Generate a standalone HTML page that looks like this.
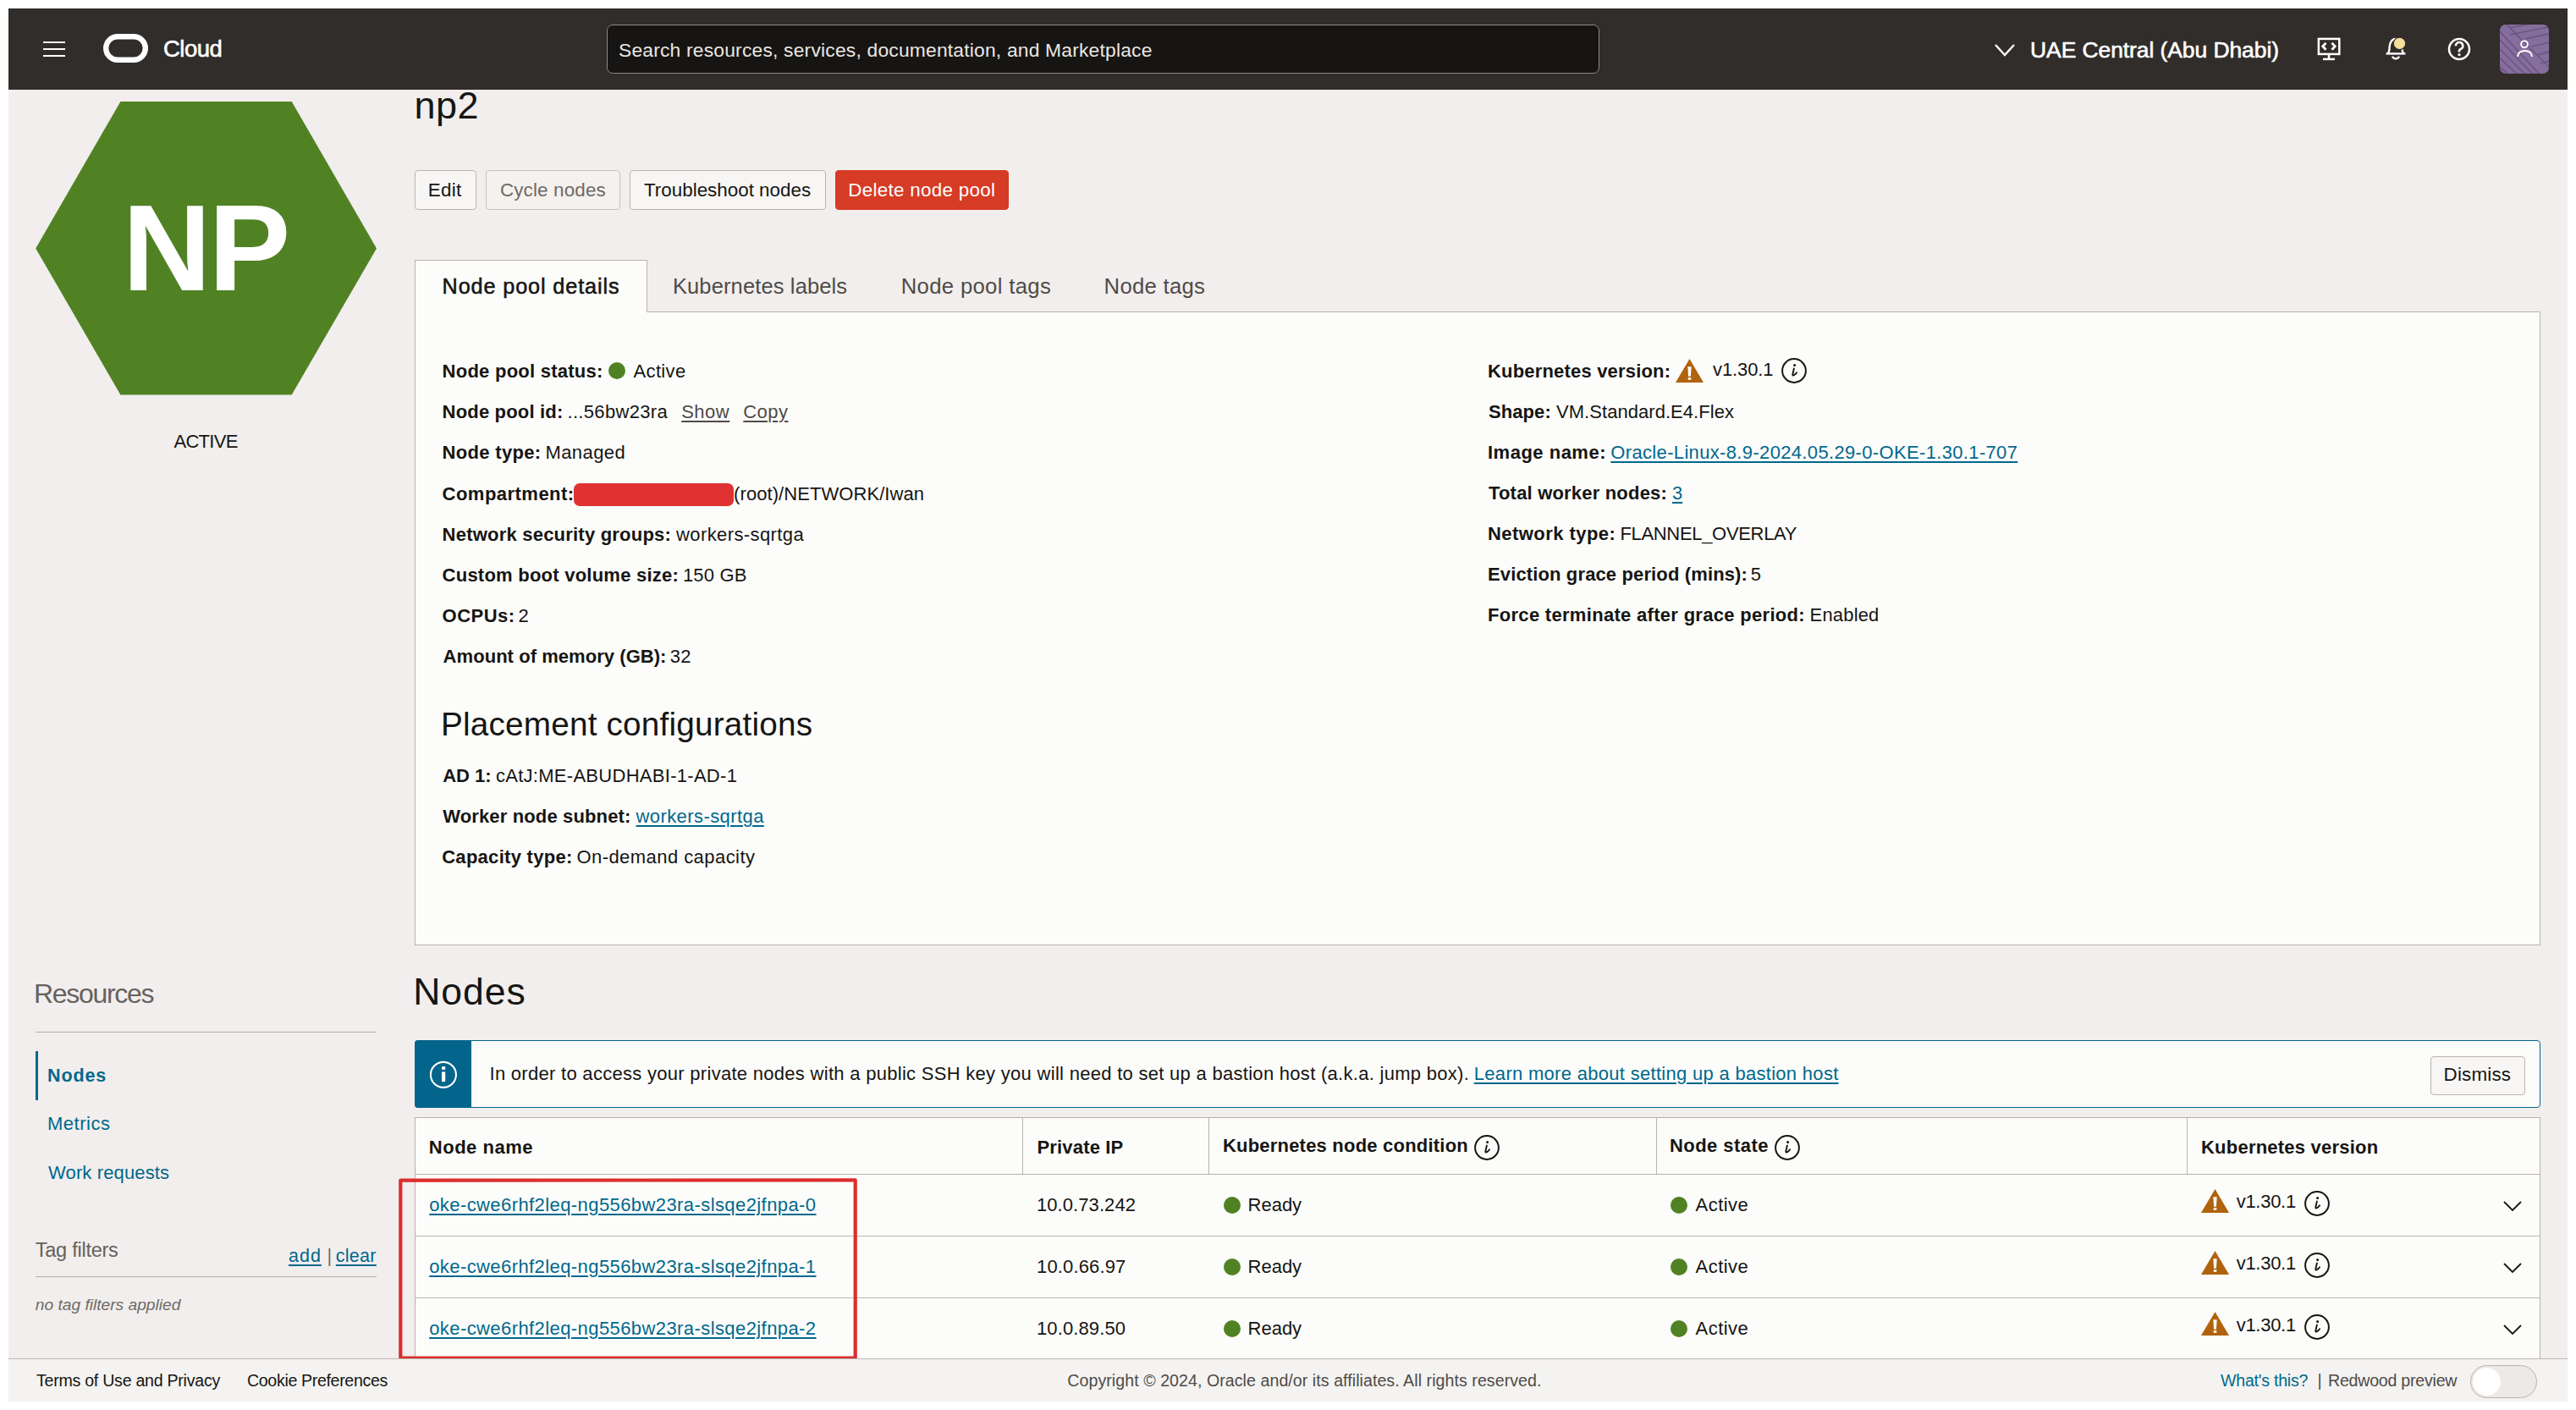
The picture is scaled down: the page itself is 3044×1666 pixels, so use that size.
<!DOCTYPE html>
<html><head><meta charset="utf-8"><title>np2 - Node pool</title>
<style>
html,body{margin:0;padding:0;background:#fff;width:3044px;height:1666px;overflow:hidden}
body{position:relative;font-family:"Liberation Sans",sans-serif}
.t{position:absolute;white-space:nowrap;line-height:1}
.ul{text-decoration:underline;text-underline-offset:3px;text-decoration-thickness:1.5px}
</style></head><body>
<div style="position:absolute;left:10px;top:106px;width:3024.0px;height:1550.0px;background:#f1eeed"></div>
<div style="position:absolute;left:10px;top:10px;width:3024.0px;height:96.0px;background:#312d2a"></div>
<div style="position:absolute;left:51px;top:48.9px;width:26.0px;height:2.3px;background:#fff"></div>
<div style="position:absolute;left:51px;top:56.9px;width:26.0px;height:2.3px;background:#fff"></div>
<div style="position:absolute;left:51px;top:64.9px;width:26.0px;height:2.3px;background:#fff"></div>
<svg style="position:absolute;left:118px;top:36px" width="62" height="42"><rect x="7.2" y="7.2" width="46.6" height="27.6" rx="13.8" fill="none" stroke="#fff" stroke-width="6.4"/></svg>
<div class="t" style="left:193.0px;top:44.3px;font-size:27.5px;font-weight:400;color:#fff;-webkit-text-stroke:0.6px #fff;letter-spacing:-0.5px;">Cloud</div>
<div style="position:absolute;left:717px;top:29px;width:1173.0px;height:58.0px;background:#161513;border:1.5px solid #8f8984;border-radius:7px;box-sizing:border-box"></div>
<div class="t" style="left:731.0px;top:48.3px;font-size:22.8px;font-weight:400;color:#ebe7e2;letter-spacing:0.211px;">Search resources, services, documentation, and Marketplace</div>
<svg style="position:absolute;left:2354px;top:48px" width="30" height="22"><polyline points="4,5 15,17 26,5" fill="none" stroke="#fff" stroke-width="2.4"/></svg>
<div class="t" style="left:2399.0px;top:45.8px;font-size:26.5px;font-weight:400;color:#fff;-webkit-text-stroke:0.6px #fff;letter-spacing:-0.091px;">UAE Central (Abu Dhabi)</div>
<svg style="position:absolute;left:2734px;top:41px" width="36" height="34" fill="none" stroke="#fff" stroke-width="2.5">
<rect x="5.9" y="4.9" width="24.4" height="18"/><line x1="18" y1="23" x2="18" y2="28.5"/><line x1="11" y1="28.9" x2="25" y2="28.9"/>
<polyline points="14.5,9.8 10.8,13.8 14.5,17.8" stroke-width="2.8"/><polyline points="21.5,9.8 25.2,13.8 21.5,17.8" stroke-width="2.8"/></svg>
<svg style="position:absolute;left:2814px;top:41px" width="36" height="34" fill="none" stroke="#fff" stroke-width="2.4">
<path d="M7.4 22.4 Q9.6 20.5 9.6 14.5 A7.4 9.6 0 0 1 24.4 14.5 Q24.4 20.5 26.6 22.4" stroke-linejoin="round"/><line x1="5.6" y1="22.4" x2="28.4" y2="22.4"/>
<path d="M13 25.6 A4.2 3.8 0 0 0 21 25.6" stroke-width="2.3"/>
<circle cx="21.5" cy="10.4" r="7.2" fill="#f7de9a" stroke="#312d2a" stroke-width="1.2"/></svg>
<svg style="position:absolute;left:2888px;top:41px" width="36" height="34" fill="none" stroke="#fff" stroke-width="2.5">
<circle cx="18" cy="17" r="12"/><path d="M13.9 13.2 A4.2 4.2 0 1 1 19 17.3 Q18 17.9 18 19.3 L18 20.6" stroke-width="2.7"/><circle cx="18" cy="23.7" r="1.6" fill="#fff" stroke="none"/></svg>
<svg style="position:absolute;left:2954px;top:29px" width="58" height="58">
<defs><clipPath id="av"><rect width="58" height="58" rx="7"/></clipPath></defs>
<g clip-path="url(#av)"><rect width="58" height="58" fill="#856d9d"/>
<g stroke="#6a5580" stroke-width="1.5" fill="none">
<path d="M12 4 L60 -6"/><path d="M12 12 L62 2"/><path d="M30 17 L62 10"/><path d="M38 26 L62 20"/><path d="M44 36 L62 31"/><path d="M48 46 L62 42"/>
<path d="M-4 4 L50 62"/><path d="M-4 14 L42 62"/><path d="M-4 25 L33 62"/><path d="M-4 36 L24 62"/><path d="M-4 47 L14 62"/><path d="M4 -4 L60 52"/>
</g></g>
<g fill="none" stroke="#fff" stroke-width="1.9"><circle cx="29" cy="23.3" r="3.9"/><path d="M21 38 Q21.5 31 29.5 31 Q37.5 31 38 38"/></g></svg>
<svg style="position:absolute;left:0;top:0" width="460" height="480"><polygon points="142.4,120 344.7,120 445,293.5 344.7,466.5 142.4,466.5 42.2,293.5" fill="#508223"/></svg>
<div class="t" style="left:144.8px;top:220.6px;font-size:145px;font-weight:700;color:#fff;letter-spacing:-3.0px;">NP</div>
<div class="t" style="left:205.4px;top:511.3px;font-size:22px;font-weight:400;color:#161513;letter-spacing:-0.68px;">ACTIVE</div>
<div class="t" style="left:489.6px;top:102.3px;font-size:45px;font-weight:400;color:#161513;letter-spacing:0.4px;">np2</div>
<div style="position:absolute;left:490px;top:201px;width:73.0px;height:47.0px;background:#f7f6f5;border:1px solid #bab5b0;border-radius:4px;box-sizing:border-box"></div>
<div class="t" style="left:505.8px;top:213.9px;font-size:22.4px;font-weight:400;color:#161513;letter-spacing:0.3px;">Edit</div>
<div style="position:absolute;left:574px;top:201px;width:159.0px;height:47.0px;background:#f5f1ee;border:1px solid #c7c1bc;border-radius:4px;box-sizing:border-box"></div>
<div class="t" style="left:590.9px;top:213.9px;font-size:22.4px;font-weight:400;color:#6f6a66;letter-spacing:0.16px;">Cycle nodes</div>
<div style="position:absolute;left:744px;top:201px;width:232.0px;height:47.0px;background:#f7f6f5;border:1px solid #bab5b0;border-radius:4px;box-sizing:border-box"></div>
<div class="t" style="left:761.0px;top:213.9px;font-size:22.4px;font-weight:400;color:#161513;letter-spacing:0.0px;">Troubleshoot nodes</div>
<div style="position:absolute;left:987px;top:201px;width:205.0px;height:47.0px;background:#d63b25;border:1px solid #d63b25;border-radius:4px;box-sizing:border-box"></div>
<div class="t" style="left:1002.2px;top:213.9px;font-size:22.4px;font-weight:400;color:#fff;letter-spacing:0.293px;">Delete node pool</div>
<div style="position:absolute;left:490px;top:368px;width:2512.0px;height:749.0px;background:#fcfcfa;border:1px solid #b9b3ae;box-sizing:border-box"></div>
<div style="position:absolute;left:490px;top:307px;width:275.0px;height:62.0px;background:#fcfcfa;border:1px solid #b9b3ae;border-bottom:none;box-sizing:border-box"></div>
<div class="t" style="left:522.6px;top:326.0px;font-size:25.2px;font-weight:400;color:#161513;-webkit-text-stroke:0.55px #161513;letter-spacing:0.894px;">Node pool details</div>
<div class="t" style="left:794.9px;top:325.7px;font-size:25.5px;font-weight:400;color:#4f4b47;letter-spacing:0.131px;">Kubernetes labels</div>
<div class="t" style="left:1064.7px;top:325.5px;font-size:25.7px;font-weight:400;color:#4f4b47;letter-spacing:0.331px;">Node pool tags</div>
<div class="t" style="left:1304.6px;top:325.5px;font-size:25.7px;font-weight:400;color:#4f4b47;letter-spacing:0.275px;">Node tags</div>
<div class="t" style="left:522.6px;top:427.7px;font-size:22px;font-weight:700;color:#161513;letter-spacing:0.25px;">Node pool status:</div>
<div style="position:absolute;left:719.0px;top:428.2px;width:20.0px;height:20.0px;background:#508223;border-radius:50%"></div>
<div class="t" style="left:748.5px;top:427.7px;font-size:22px;font-weight:400;color:#161513;letter-spacing:0.36px;">Active</div>
<div class="t" style="left:522.6px;top:476.0px;font-size:22px;font-weight:700;color:#161513;letter-spacing:0.175px;">Node pool id:</div>
<div class="t" style="left:670.5px;top:476.0px;font-size:22px;font-weight:400;color:#161513;letter-spacing:0.32px;">...56bw23ra</div>
<div class="t" style="left:805.2px;top:476.0px;font-size:22px;font-weight:400;color:#4f4b47;text-decoration:underline;text-underline-offset:3px;text-decoration-thickness:1.5px;letter-spacing:0.5px;">Show</div>
<div class="t" style="left:878.3px;top:476.0px;font-size:22px;font-weight:400;color:#4f4b47;text-decoration:underline;text-underline-offset:3px;text-decoration-thickness:1.5px;letter-spacing:0.433px;">Copy</div>
<div class="t" style="left:522.6px;top:524.4px;font-size:22px;font-weight:700;color:#161513;letter-spacing:0.322px;">Node type:</div>
<div class="t" style="left:644.4px;top:524.4px;font-size:22px;font-weight:400;color:#161513;letter-spacing:0.433px;">Managed</div>
<div class="t" style="left:522.6px;top:572.7px;font-size:22px;font-weight:700;color:#161513;letter-spacing:0.473px;">Compartment:</div>
<div style="position:absolute;left:677.7px;top:571.4px;width:189.6px;height:27.0px;background:#e03232;border-radius:7px"></div>
<div class="t" style="left:867.1px;top:572.7px;font-size:22px;font-weight:400;color:#161513;letter-spacing:0.067px;">(root)/NETWORK/Iwan</div>
<div class="t" style="left:522.6px;top:620.7px;font-size:22px;font-weight:700;color:#161513;letter-spacing:0.217px;">Network security groups:</div>
<div class="t" style="left:799.1px;top:620.7px;font-size:22px;font-weight:400;color:#161513;letter-spacing:0.392px;">workers-sqrtga</div>
<div class="t" style="left:522.6px;top:668.7px;font-size:22px;font-weight:700;color:#161513;letter-spacing:0.235px;">Custom boot volume size:</div>
<div class="t" style="left:806.9px;top:668.7px;font-size:22px;font-weight:400;color:#161513;letter-spacing:0.18px;">150 GB</div>
<div class="t" style="left:522.6px;top:716.7px;font-size:22px;font-weight:700;color:#161513;letter-spacing:0.48px;">OCPUs:</div>
<div class="t" style="left:612.6px;top:716.7px;font-size:22px;font-weight:400;color:#161513;letter-spacing:0px;">2</div>
<div class="t" style="left:523.6px;top:764.8px;font-size:22px;font-weight:700;color:#161513;letter-spacing:0.052px;">Amount of memory (GB):</div>
<div class="t" style="left:791.7px;top:764.8px;font-size:22px;font-weight:400;color:#161513;letter-spacing:0.3px;">32</div>
<div class="t" style="left:1758.0px;top:427.7px;font-size:22px;font-weight:700;color:#161513;letter-spacing:0.183px;">Kubernetes version:</div>
<svg style="position:absolute;left:1980px;top:424px" width="33" height="28" viewBox="0 0 33 28"><polygon points="16.5,0 33,28 0,28" fill="#b0620c"/><polygon points="14.3,9.2 18.7,9.2 17.9,20.8 15.1,20.8" fill="#fff"/><rect x="14.7" y="22.1" width="3.6" height="2.7" fill="#fff"/></svg>
<div class="t" style="left:2024.0px;top:425.8px;font-size:22px;font-weight:400;color:#161513;letter-spacing:-0.1px;">v1.30.1</div>
<svg style="position:absolute;left:2105px;top:423px" width="30" height="30" viewBox="0 0 30 30"><circle cx="15" cy="15" r="13.9" fill="none" stroke="#161513" stroke-width="2"/><circle cx="15.6" cy="8.4" r="1.5" fill="#161513"/><path d="M14.9 12.4 L13.4 19 Q13 20.9 14.6 20.4 Q16.4 19.7 18.1 17.3" fill="none" stroke="#161513" stroke-width="1.9" stroke-linecap="round" stroke-linejoin="round"/></svg>
<div class="t" style="left:1759.0px;top:475.7px;font-size:22px;font-weight:700;color:#161513;letter-spacing:0.08px;">Shape:</div>
<div class="t" style="left:1839.0px;top:475.7px;font-size:22px;font-weight:400;color:#161513;letter-spacing:0.05px;">VM.Standard.E4.Flex</div>
<div class="t" style="left:1758.0px;top:523.7px;font-size:22px;font-weight:700;color:#161513;letter-spacing:0.5px;">Image name:</div>
<div class="t" style="left:1903.3px;top:523.7px;font-size:22px;font-weight:400;color:#00688c;text-decoration:underline;text-underline-offset:3px;text-decoration-thickness:1.5px;letter-spacing:0.342px;">Oracle-Linux-8.9-2024.05.29-0-OKE-1.30.1-707</div>
<div class="t" style="left:1759.0px;top:571.7px;font-size:22px;font-weight:700;color:#161513;letter-spacing:0.189px;">Total worker nodes:</div>
<div class="t" style="left:1976.0px;top:571.7px;font-size:22px;font-weight:400;color:#00688c;text-decoration:underline;text-underline-offset:3px;text-decoration-thickness:1.5px;letter-spacing:0px;">3</div>
<div class="t" style="left:1758.0px;top:619.7px;font-size:22px;font-weight:700;color:#161513;letter-spacing:0.442px;">Network type:</div>
<div class="t" style="left:1914.4px;top:619.7px;font-size:22px;font-weight:400;color:#161513;letter-spacing:-0.321px;">FLANNEL_OVERLAY</div>
<div class="t" style="left:1758.0px;top:667.7px;font-size:22px;font-weight:700;color:#161513;letter-spacing:0.132px;">Eviction grace period (mins):</div>
<div class="t" style="left:2068.7px;top:667.7px;font-size:22px;font-weight:400;color:#161513;letter-spacing:0px;">5</div>
<div class="t" style="left:1758.0px;top:715.7px;font-size:22px;font-weight:700;color:#161513;letter-spacing:0.303px;">Force terminate after grace period:</div>
<div class="t" style="left:2138.6px;top:715.7px;font-size:22px;font-weight:400;color:#161513;letter-spacing:0.167px;">Enabled</div>
<div class="t" style="left:521.0px;top:837.1px;font-size:38.7px;font-weight:400;color:#161513;letter-spacing:0.2px;">Placement configurations</div>
<div class="t" style="left:523.2px;top:905.7px;font-size:22px;font-weight:700;color:#161513;letter-spacing:-0.025px;">AD 1:</div>
<div class="t" style="left:585.9px;top:905.7px;font-size:22px;font-weight:400;color:#161513;letter-spacing:0.286px;">cAtJ:ME-ABUDHABI-1-AD-1</div>
<div class="t" style="left:523.2px;top:953.7px;font-size:22px;font-weight:700;color:#161513;letter-spacing:0.139px;">Worker node subnet:</div>
<div class="t" style="left:751.5px;top:953.7px;font-size:22px;font-weight:400;color:#00688c;text-decoration:underline;text-underline-offset:3px;text-decoration-thickness:1.5px;letter-spacing:0.415px;">workers-sqrtga</div>
<div class="t" style="left:522.2px;top:1001.8px;font-size:22px;font-weight:700;color:#161513;letter-spacing:0.285px;">Capacity type:</div>
<div class="t" style="left:681.4px;top:1001.8px;font-size:22px;font-weight:400;color:#161513;letter-spacing:0.447px;">On-demand capacity</div>
<div class="t" style="left:40.0px;top:1158.1px;font-size:32px;font-weight:400;color:#66615d;letter-spacing:-1.312px;">Resources</div>
<div style="position:absolute;left:42px;top:1219px;width:403.0px;height:1.0px;background:#b5afaa"></div>
<div style="position:absolute;left:42px;top:1242px;width:3.0px;height:58.0px;background:#00688c"></div>
<div class="t" style="left:56.0px;top:1261.4px;font-size:21.5px;font-weight:700;color:#00688c;letter-spacing:0.875px;">Nodes</div>
<div class="t" style="left:56.0px;top:1317.0px;font-size:22px;font-weight:400;color:#00688c;letter-spacing:0.5px;">Metrics</div>
<div class="t" style="left:57.0px;top:1374.8px;font-size:22px;font-weight:400;color:#00688c;letter-spacing:0.142px;">Work requests</div>
<div class="t" style="left:41.8px;top:1466.3px;font-size:23.5px;font-weight:400;color:#66615d;letter-spacing:-0.25px;">Tag filters</div>
<div class="t" style="left:341.0px;top:1473.7px;font-size:21.5px;font-weight:400;color:#00688c;text-decoration:underline;text-underline-offset:3px;text-decoration-thickness:1.5px;letter-spacing:1.0px;">add</div>
<div class="t" style="left:386.5px;top:1473.7px;font-size:21.5px;font-weight:400;color:#6f6a66;">|</div>
<div class="t" style="left:396.8px;top:1473.7px;font-size:21.5px;font-weight:400;color:#00688c;text-decoration:underline;text-underline-offset:3px;text-decoration-thickness:1.5px;letter-spacing:0.275px;">clear</div>
<div style="position:absolute;left:42px;top:1508px;width:403.0px;height:1.0px;background:#b5afaa"></div>
<div class="t" style="left:41.8px;top:1531.5px;font-size:19.2px;font-weight:400;color:#6f6a66;font-style:italic;letter-spacing:-0.01px;">no tag filters applied</div>
<div class="t" style="left:488.3px;top:1149.7px;font-size:44.5px;font-weight:400;color:#161513;letter-spacing:0.925px;">Nodes</div>
<div style="position:absolute;left:490px;top:1229px;width:2512.0px;height:80.0px;background:#fcfcfa;border:1.2px solid #03658c;border-radius:4px;box-sizing:border-box"></div>
<div style="position:absolute;left:490px;top:1229px;width:67.0px;height:80.0px;background:#03658c;border-radius:4px 0 0 4px"></div>
<svg style="position:absolute;left:500px;top:1250px" width="48" height="40"><circle cx="23.9" cy="19.9" r="15" fill="none" stroke="#fff" stroke-width="2.1"/><rect x="22" y="16.4" width="4.2" height="11.7" fill="#fff"/><rect x="22" y="10.2" width="4.2" height="3.6" fill="#fff"/></svg>
<div class="t" style="left:578.5px;top:1257.7px;font-size:22px;font-weight:400;color:#161513;letter-spacing:0.289px;">In order to access your private nodes with a public SSH key you will need to set up a bastion host (a.k.a. jump box).</div>
<div class="t" style="left:1741.8px;top:1257.7px;font-size:22px;font-weight:400;color:#00688c;text-decoration:underline;text-underline-offset:3px;text-decoration-thickness:1.5px;letter-spacing:0.298px;">Learn more about setting up a bastion host</div>
<div style="position:absolute;left:2872px;top:1247.5px;width:112.0px;height:46.0px;background:#f7f6f5;border:1px solid #bab5b0;border-radius:4px;box-sizing:border-box"></div>
<div class="t" style="left:2887.6px;top:1259.1px;font-size:22.4px;font-weight:400;color:#161513;letter-spacing:0.183px;">Dismiss</div>
<div style="position:absolute;left:490px;top:1320px;width:2512.0px;height:286.0px;background:#fcfcfa;border:1px solid #b9b3ae;border-bottom:none;box-sizing:border-box"></div>
<div style="position:absolute;left:490px;top:1387px;width:2512.0px;height:1.0px;background:#b9b3ae"></div>
<div style="position:absolute;left:1208px;top:1320px;width:1.0px;height:67.0px;background:#b9b3ae"></div>
<div style="position:absolute;left:1428px;top:1320px;width:1.0px;height:67.0px;background:#b9b3ae"></div>
<div style="position:absolute;left:1957px;top:1320px;width:1.0px;height:67.0px;background:#b9b3ae"></div>
<div style="position:absolute;left:2584px;top:1320px;width:1.0px;height:67.0px;background:#b9b3ae"></div>
<div class="t" style="left:506.8px;top:1344.8px;font-size:22px;font-weight:700;color:#161513;letter-spacing:0.512px;">Node name</div>
<div class="t" style="left:1225.5px;top:1345.0px;font-size:22px;font-weight:700;color:#161513;letter-spacing:0.167px;">Private IP</div>
<div class="t" style="left:1444.9px;top:1343.3px;font-size:22px;font-weight:700;color:#161513;letter-spacing:0.212px;">Kubernetes node condition</div>
<svg style="position:absolute;left:1742px;top:1341px" width="30" height="30" viewBox="0 0 30 30"><circle cx="15" cy="15" r="13.9" fill="none" stroke="#161513" stroke-width="2"/><circle cx="15.6" cy="8.4" r="1.5" fill="#161513"/><path d="M14.9 12.4 L13.4 19 Q13 20.9 14.6 20.4 Q16.4 19.7 18.1 17.3" fill="none" stroke="#161513" stroke-width="1.9" stroke-linecap="round" stroke-linejoin="round"/></svg>
<div class="t" style="left:1973.0px;top:1343.3px;font-size:22px;font-weight:700;color:#161513;letter-spacing:0.444px;">Node state</div>
<svg style="position:absolute;left:2097px;top:1341px" width="30" height="30" viewBox="0 0 30 30"><circle cx="15" cy="15" r="13.9" fill="none" stroke="#161513" stroke-width="2"/><circle cx="15.6" cy="8.4" r="1.5" fill="#161513"/><path d="M14.9 12.4 L13.4 19 Q13 20.9 14.6 20.4 Q16.4 19.7 18.1 17.3" fill="none" stroke="#161513" stroke-width="1.9" stroke-linecap="round" stroke-linejoin="round"/></svg>
<div class="t" style="left:2601.0px;top:1345.0px;font-size:22px;font-weight:700;color:#161513;letter-spacing:0.224px;">Kubernetes version</div>
<div class="t" style="left:507.2px;top:1412.8px;font-size:22px;font-weight:400;color:#00688c;text-decoration:underline;text-underline-offset:3px;text-decoration-thickness:1.5px;letter-spacing:0.415px;">oke-cwe6rhf2leq-ng556bw23ra-slsqe2jfnpa-0</div>
<div class="t" style="left:1225.0px;top:1412.8px;font-size:22px;font-weight:400;color:#161513;letter-spacing:0.07px;">10.0.73.242</div>
<div style="position:absolute;left:1446.1px;top:1414.2px;width:20.0px;height:20.0px;background:#508223;border-radius:50%"></div>
<div class="t" style="left:1474.6px;top:1412.8px;font-size:22px;font-weight:400;color:#161513;letter-spacing:-0.025px;">Ready</div>
<div style="position:absolute;left:1974.0px;top:1414.2px;width:20.0px;height:20.0px;background:#508223;border-radius:50%"></div>
<div class="t" style="left:2003.6px;top:1412.8px;font-size:22px;font-weight:400;color:#161513;letter-spacing:0.46px;">Active</div>
<svg style="position:absolute;left:2601px;top:1405px" width="33" height="28" viewBox="0 0 33 28"><polygon points="16.5,0 33,28 0,28" fill="#b0620c"/><polygon points="14.3,9.2 18.7,9.2 17.9,20.8 15.1,20.8" fill="#fff"/><rect x="14.7" y="22.1" width="3.6" height="2.7" fill="#fff"/></svg>
<div class="t" style="left:2642.7px;top:1409.0px;font-size:22px;font-weight:400;color:#161513;letter-spacing:-0.283px;">v1.30.1</div>
<svg style="position:absolute;left:2723px;top:1407px" width="30" height="30" viewBox="0 0 30 30"><circle cx="15" cy="15" r="13.9" fill="none" stroke="#161513" stroke-width="2"/><circle cx="15.6" cy="8.4" r="1.5" fill="#161513"/><path d="M14.9 12.4 L13.4 19 Q13 20.9 14.6 20.4 Q16.4 19.7 18.1 17.3" fill="none" stroke="#161513" stroke-width="1.9" stroke-linecap="round" stroke-linejoin="round"/></svg>
<svg style="position:absolute;left:2955px;top:1417px" width="28" height="16"><polyline points="4,3 14,13 24,3" fill="none" stroke="#161513" stroke-width="1.8"/></svg>
<div style="position:absolute;left:490px;top:1460px;width:2512.0px;height:1.0px;background:#bcb6b1"></div>
<div class="t" style="left:507.2px;top:1485.7px;font-size:22px;font-weight:400;color:#00688c;text-decoration:underline;text-underline-offset:3px;text-decoration-thickness:1.5px;letter-spacing:0.415px;">oke-cwe6rhf2leq-ng556bw23ra-slsqe2jfnpa-1</div>
<div class="t" style="left:1225.0px;top:1485.7px;font-size:22px;font-weight:400;color:#161513;letter-spacing:0.144px;">10.0.66.97</div>
<div style="position:absolute;left:1446.1px;top:1487.1000000000001px;width:20.0px;height:20.0px;background:#508223;border-radius:50%"></div>
<div class="t" style="left:1474.6px;top:1485.7px;font-size:22px;font-weight:400;color:#161513;letter-spacing:-0.025px;">Ready</div>
<div style="position:absolute;left:1974.0px;top:1487.1000000000001px;width:20.0px;height:20.0px;background:#508223;border-radius:50%"></div>
<div class="t" style="left:2003.6px;top:1485.7px;font-size:22px;font-weight:400;color:#161513;letter-spacing:0.46px;">Active</div>
<svg style="position:absolute;left:2601px;top:1478px" width="33" height="28" viewBox="0 0 33 28"><polygon points="16.5,0 33,28 0,28" fill="#b0620c"/><polygon points="14.3,9.2 18.7,9.2 17.9,20.8 15.1,20.8" fill="#fff"/><rect x="14.7" y="22.1" width="3.6" height="2.7" fill="#fff"/></svg>
<div class="t" style="left:2642.7px;top:1481.9px;font-size:22px;font-weight:400;color:#161513;letter-spacing:-0.283px;">v1.30.1</div>
<svg style="position:absolute;left:2723px;top:1480px" width="30" height="30" viewBox="0 0 30 30"><circle cx="15" cy="15" r="13.9" fill="none" stroke="#161513" stroke-width="2"/><circle cx="15.6" cy="8.4" r="1.5" fill="#161513"/><path d="M14.9 12.4 L13.4 19 Q13 20.9 14.6 20.4 Q16.4 19.7 18.1 17.3" fill="none" stroke="#161513" stroke-width="1.9" stroke-linecap="round" stroke-linejoin="round"/></svg>
<svg style="position:absolute;left:2955px;top:1490px" width="28" height="16"><polyline points="4,3 14,13 24,3" fill="none" stroke="#161513" stroke-width="1.8"/></svg>
<div style="position:absolute;left:490px;top:1533px;width:2512.0px;height:1.0px;background:#bcb6b1"></div>
<div class="t" style="left:507.2px;top:1558.6px;font-size:22px;font-weight:400;color:#00688c;text-decoration:underline;text-underline-offset:3px;text-decoration-thickness:1.5px;letter-spacing:0.415px;">oke-cwe6rhf2leq-ng556bw23ra-slsqe2jfnpa-2</div>
<div class="t" style="left:1225.0px;top:1558.6px;font-size:22px;font-weight:400;color:#161513;letter-spacing:0.111px;">10.0.89.50</div>
<div style="position:absolute;left:1446.1px;top:1560.0px;width:20.0px;height:20.0px;background:#508223;border-radius:50%"></div>
<div class="t" style="left:1474.6px;top:1558.6px;font-size:22px;font-weight:400;color:#161513;letter-spacing:-0.025px;">Ready</div>
<div style="position:absolute;left:1974.0px;top:1560.0px;width:20.0px;height:20.0px;background:#508223;border-radius:50%"></div>
<div class="t" style="left:2003.6px;top:1558.6px;font-size:22px;font-weight:400;color:#161513;letter-spacing:0.46px;">Active</div>
<svg style="position:absolute;left:2601px;top:1550px" width="33" height="28" viewBox="0 0 33 28"><polygon points="16.5,0 33,28 0,28" fill="#b0620c"/><polygon points="14.3,9.2 18.7,9.2 17.9,20.8 15.1,20.8" fill="#fff"/><rect x="14.7" y="22.1" width="3.6" height="2.7" fill="#fff"/></svg>
<div class="t" style="left:2642.7px;top:1554.8px;font-size:22px;font-weight:400;color:#161513;letter-spacing:-0.283px;">v1.30.1</div>
<svg style="position:absolute;left:2723px;top:1553px" width="30" height="30" viewBox="0 0 30 30"><circle cx="15" cy="15" r="13.9" fill="none" stroke="#161513" stroke-width="2"/><circle cx="15.6" cy="8.4" r="1.5" fill="#161513"/><path d="M14.9 12.4 L13.4 19 Q13 20.9 14.6 20.4 Q16.4 19.7 18.1 17.3" fill="none" stroke="#161513" stroke-width="1.9" stroke-linecap="round" stroke-linejoin="round"/></svg>
<svg style="position:absolute;left:2955px;top:1563px" width="28" height="16"><polyline points="4,3 14,13 24,3" fill="none" stroke="#161513" stroke-width="1.8"/></svg>
<svg style="position:absolute;left:460px;top:1385px" width="570" height="235"><path d="M13.3 9.6 L550.7 9.4 L550.7 219.4 L13.3 219.6 Z" fill="none" stroke="#dc2d2d" stroke-width="4.2" stroke-linejoin="round"/></svg>
<div style="position:absolute;left:10px;top:1605px;width:3024.0px;height:51.0px;background:#f4f3f1;border-top:1px solid #bcb6b1;box-sizing:border-box"></div>
<div class="t" style="left:43.0px;top:1621.8px;font-size:19.6px;font-weight:400;color:#161513;letter-spacing:-0.261px;">Terms of Use and Privacy</div>
<div class="t" style="left:292.0px;top:1621.8px;font-size:19.6px;font-weight:400;color:#161513;letter-spacing:-0.341px;">Cookie Preferences</div>
<div class="t" style="left:1261.3px;top:1621.8px;font-size:19.6px;font-weight:400;color:#4f4b47;letter-spacing:0.055px;">Copyright © 2024, Oracle and/or its affiliates. All rights reserved.</div>
<div class="t" style="left:2624.0px;top:1622.1px;font-size:19.6px;font-weight:400;color:#00688c;letter-spacing:-0.245px;">What's this?</div>
<div class="t" style="left:2738.5px;top:1622.1px;font-size:19.6px;font-weight:400;color:#4f4b47;">|</div>
<div class="t" style="left:2751.0px;top:1622.1px;font-size:19.6px;font-weight:400;color:#4f4b47;letter-spacing:-0.236px;">Redwood preview</div>
<div style="position:absolute;left:2919px;top:1612.5px;width:79.0px;height:39.0px;background:#ede9e6;border:1.2px solid #b9b3ad;border-radius:20px;box-sizing:border-box"></div>
<div style="position:absolute;left:2922px;top:1615.5px;width:33px;height:33px;border-radius:50%;background:#fff"></div>
</body></html>
